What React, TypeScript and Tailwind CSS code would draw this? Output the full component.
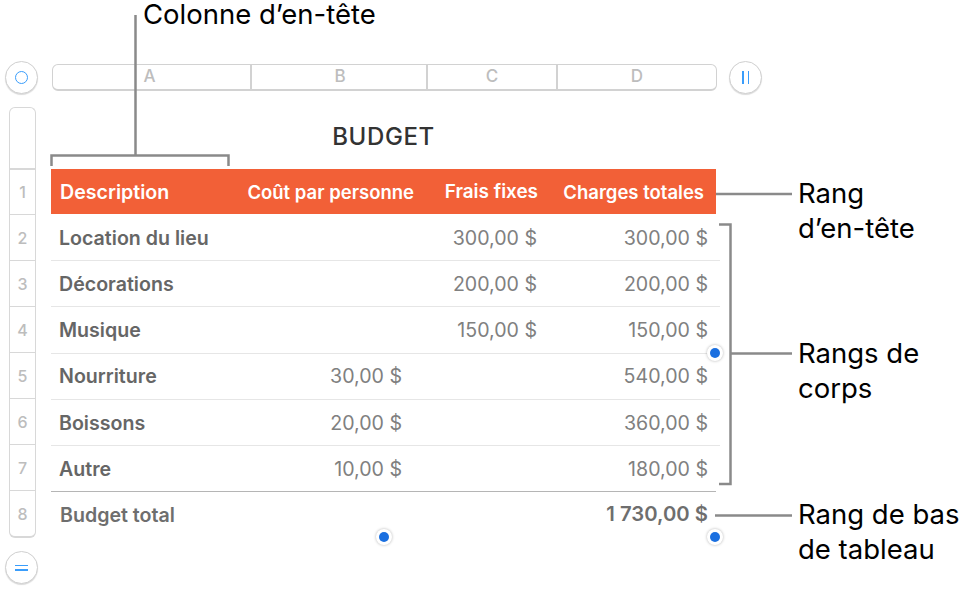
import React from 'react';

const rows = [
  { n: 2, label: 'Location du lieu', b: '', c: '300,00 $', d: '300,00 $' },
  { n: 3, label: 'Décorations', b: '', c: '200,00 $', d: '200,00 $' },
  { n: 4, label: 'Musique', b: '', c: '150,00 $', d: '150,00 $' },
  { n: 5, label: 'Nourriture', b: '30,00 $', c: '', d: '540,00 $' },
  { n: 6, label: 'Boissons', b: '20,00 $', c: '', d: '360,00 $' },
  { n: 7, label: 'Autre', b: '10,00 $', c: '', d: '180,00 $' },
];

const Handle = ({ className }: { className: string }) => (
  <div className={`absolute w-[16px] h-[16px] rounded-full bg-white shadow-[0_0_3px_rgba(0,0,0,0.3)] flex items-center justify-center ${className}`}>
    <div className="w-[10px] h-[10px] rounded-full bg-[#1a6fe0]" />
  </div>
);

const RoundButton = ({ children }: { children: React.ReactNode }) => (
  <div className="w-[33px] h-[33px] rounded-full bg-white border border-[#d0d0d0] shadow-[0_1px_1px_rgba(0,0,0,0.15)] flex items-center justify-center">
    {children}
  </div>
);

const App = () => {
  return (
    <div className="relative w-[966px] h-[593px] overflow-hidden bg-white font-['Inter',sans-serif]">
      <div className="pt-[61px]">
        {/* barre des colonnes */}
        <div className="flex items-center">
          <div className="ml-[5px] mr-[14px]">
            <RoundButton>
              <div className="w-[13px] h-[13px] rounded-full border-[1.5px] border-[#3a9dfb]" />
            </RoundButton>
          </div>
          <div className="w-[665px] h-[27px] flex rounded-[6px] border border-[#d2d2d2] border-b-2 text-[17px] font-medium text-[#bdbdbd]">
            <div className="w-[199px] pr-[4px] border-r-2 border-[#d2d2d2] flex items-center justify-center">A</div>
            <div className="w-[176px] pl-[2px] border-r-2 border-[#d2d2d2] flex items-center justify-center">B</div>
            <div className="w-[130px] border-r-2 border-[#d2d2d2] flex items-center justify-center">C</div>
            <div className="flex-1 flex items-center justify-center">D</div>
          </div>
          <div className="ml-[12px]">
            <RoundButton>
              <div className="flex gap-[4px]">
                <div className="w-[1.5px] h-[13px] bg-[#3a9dfb]" />
                <div className="w-[1.5px] h-[13px] bg-[#3a9dfb]" />
              </div>
            </RoundButton>
          </div>
        </div>

        <div className="flex mt-[13px]">
          {/* barre des rangs */}
          <div className="ml-[9px] mr-[15px] w-[27px] flex flex-col self-start">
            <div className="h-[61px] rounded-t-[6px] border border-b-0 border-[#d8d8d8]" />
            <div className="rounded-b-[6px] border-x border-b-2 border-[#d8d8d8] text-[16px] font-medium text-[#bdbdbd]">
              {[1, 2, 3, 4, 5, 6, 7, 8].map((n) => (
                <div key={n} className="h-[46px] border-t border-[#d8d8d8] first:border-t-2 flex items-center justify-center">
                  {n}
                </div>
              ))}
            </div>
          </div>

          {/* tableau */}
          <div className="w-[669px]">
            <div className="h-[62px] pt-[12px] text-center text-[24px] leading-[36px] font-medium tracking-[0.6px] text-[#333333]">
              <span className="ml-[-4px]">BUDGET</span>
            </div>
            <div className="w-[665px] h-[45px] pt-[1px] bg-[#f26037] grid grid-cols-[190px_186px_129px_160px] items-center text-[18.5px] leading-[24px] font-semibold text-white">
              <div className="pl-[9px] text-[19.6px] whitespace-nowrap">Description</div>
              <div className="text-right pr-[13px] whitespace-nowrap">Coût par personne</div>
              <div className="text-right pr-[18px] text-[18.9px]">Frais fixes</div>
              <div className="text-right pr-[12px] whitespace-nowrap">Charges totales</div>
            </div>
            <div className="mt-[1px]">
              {rows.map((r) => (
                <div
                  key={r.n}
                  className={`h-[46.2px] pt-[2px] grid grid-cols-[200px_176px_129px_160px] items-center text-[19.6px] text-[#808080] border-b ${r.n === 7 ? 'w-[665px] border-[#b5b5b5]' : 'w-[669px] border-[#e6e6e6]'}`}
                >
                  <div className="pl-[8px] font-semibold text-[#666666] whitespace-nowrap">{r.label}</div>
                  <div className="text-right pr-[25px]">{r.b}</div>
                  <div className="text-right pr-[19px]">{r.c}</div>
                  <div className="text-right pr-[8px]">{r.d}</div>
                </div>
              ))}
            </div>
            <div className="w-[665px] h-[46px] pt-[2px] grid grid-cols-[505px_160px] items-center text-[19.6px] font-semibold text-[#6e6e6e]">
              <div className="pl-[9px]">Budget total</div>
              <div className="text-right pr-[8px] mt-[-3px] text-[20.3px]">1 730,00 $</div>
            </div>
          </div>
        </div>

        <div className="ml-[5px] mt-[13px]">
          <RoundButton>
            <div className="flex flex-col gap-[3px]">
              <div className="w-[13px] h-[1.5px] bg-[#3a9dfb]" />
              <div className="w-[13px] h-[1.5px] bg-[#3a9dfb]" />
            </div>
          </RoundButton>
        </div>
      </div>

      <Handle className="left-[707px] top-[345px]" />
      <Handle className="left-[376px] top-[529px]" />
      <Handle className="left-[707px] top-[529px]" />

      {/* annotations */}
      <svg className="absolute left-0 top-0 pointer-events-none" width="966" height="593" fill="none" stroke="#8a8a8a" strokeWidth="2.5">
        <path d="M135.500 15V155" />
        <path d="M51.500 166V155.500H228.500V166" />
        <path d="M716 194H792" />
        <path d="M719 224.500H730.500V484H719" />
        <path d="M731 353.500H792" />
        <path d="M715 515.500H792" />
      </svg>
      <div className="absolute left-[143px] top-0 text-[27.5px] leading-[28px] text-black whitespace-nowrap">Colonne d’en-tête</div>
      <div className="absolute left-[798px] top-[176px] text-[27.5px] leading-[35px] text-black">Rang<br />d’en-tête</div>
      <div className="absolute left-[798px] top-[336px] text-[27.5px] leading-[35px] text-black">Rangs de<br />corps</div>
      <div className="absolute left-[798px] top-[497px] text-[27.5px] leading-[35px] text-black whitespace-nowrap">Rang de bas<br />de tableau</div>
    </div>
  );
};

export default App;
